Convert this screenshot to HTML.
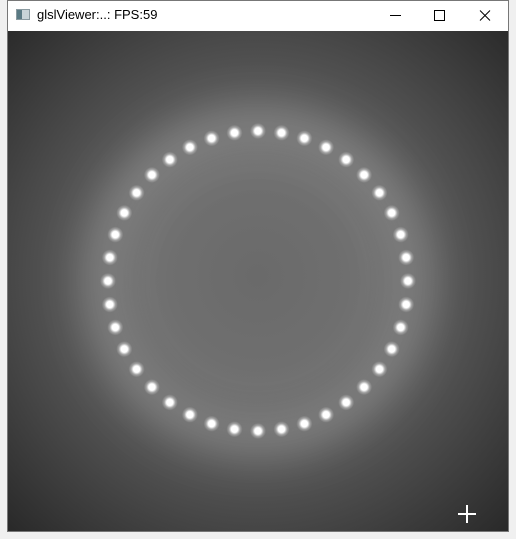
<!DOCTYPE html>
<html><head><style>
body{margin:0;width:516px;height:539px;background:#f0f0f0;overflow:hidden;font-family:"Segoe UI","Liberation Sans",sans-serif;position:relative}
.win{position:absolute;left:7px;top:0;width:502px;height:532px;background:#fff;border:1px solid #777;box-sizing:border-box}
.title{position:absolute;left:37px;top:7px;font-size:13px;color:#000}
.icon{position:absolute;left:16px;top:9px;width:14px;height:11px;background:linear-gradient(90deg,#5a7a84 0 5px,#c8d4d8 5px);border:1px solid #8a9aa0;box-sizing:border-box}
svg.c{position:absolute;left:8px;top:31px}
</style></head><body>
<div class="win"></div>
<div class="icon"></div>
<div class="title">glslViewer:..: FPS:59</div>
<svg style="position:absolute;left:380px;top:8px" width="120" height="16">
<line x1="10" y1="7.5" x2="21" y2="7.5" stroke="#000" stroke-width="1"/>
<rect x="54.5" y="2.5" width="10" height="10" fill="none" stroke="#000"/>
<path d="M100 2.5 L110 12.5 M110 2.5 L100 12.5" stroke="#000" fill="none"/>
</svg>
<svg class="c" width="500" height="500" id="s">
<defs>
<radialGradient id="bg" cx="250" cy="245" r="360" gradientUnits="userSpaceOnUse">
<stop offset="0" stop-color="#6a6a6a"/><stop offset="0.3" stop-color="#707070"/><stop offset="0.5" stop-color="#5a5a5a"/><stop offset="1" stop-color="#282828"/>
</radialGradient>
<filter id="bl" x="-50%" y="-50%" width="200%" height="200%"><feGaussianBlur stdDeviation="22"/></filter>
<radialGradient id="d"><stop offset="0" stop-color="#fff"/><stop offset="0.4" stop-color="#fff"/><stop offset="0.7" stop-color="#fff" stop-opacity="0.3"/><stop offset="1" stop-color="#fff" stop-opacity="0"/></radialGradient>
</defs>
<rect width="500" height="500" fill="url(#bg)"/>
<circle cx="250" cy="250" r="155" fill="none" stroke="#c0c0c0" stroke-opacity="0.45" stroke-width="30" filter="url(#bl)"/>
<g id="g"></g>
<path d="M459 474V492M450 483H468" stroke="#fff" stroke-width="2"/>
</svg>
<script>
var g=document.getElementById('g'),h='';
for(var i=0;i<40;i++){var a=i*Math.PI*2/40;var x=250+150*Math.sin(a),y=250-150*Math.cos(a);
h+='<circle cx="'+x.toFixed(1)+'" cy="'+y.toFixed(1)+'" r="8" fill="url(#d)"/>';}
g.innerHTML=h;
</script>
</body></html>
